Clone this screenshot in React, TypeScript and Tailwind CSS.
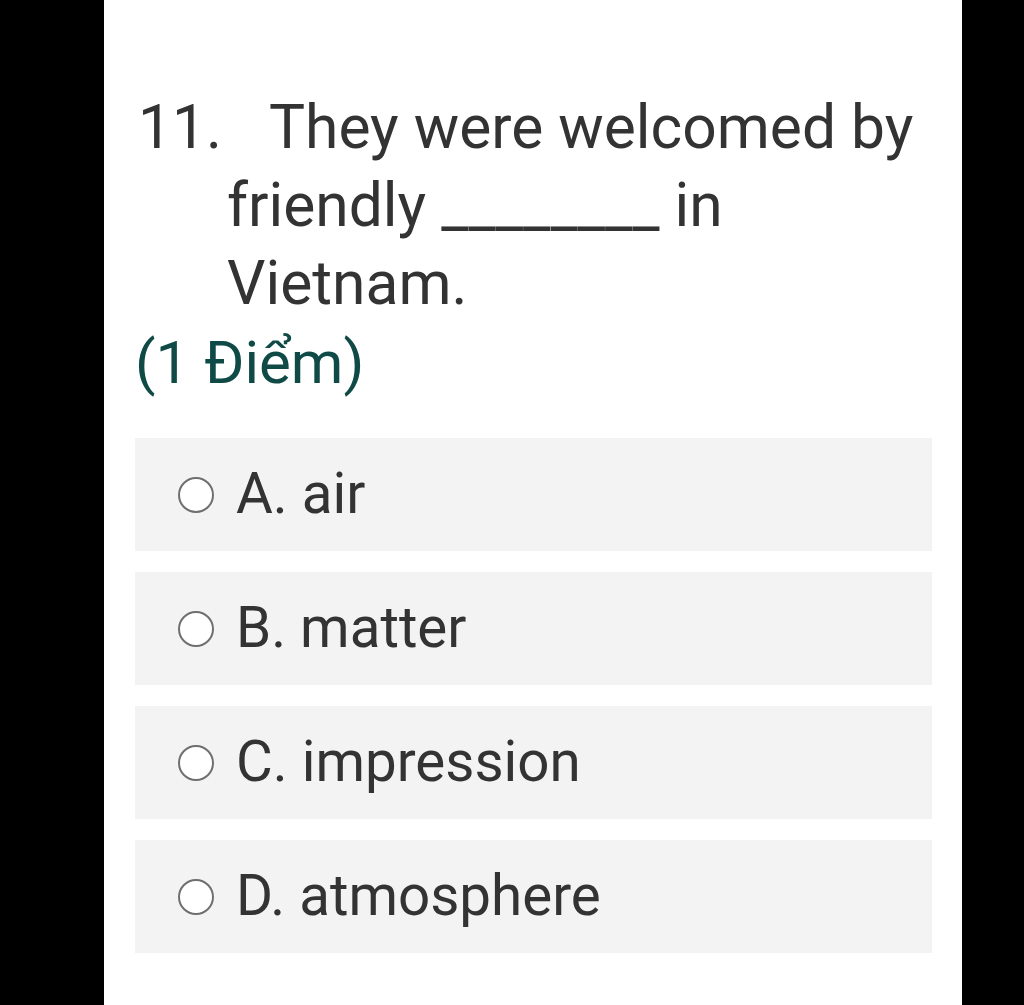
const options = ['A. air', 'B. matter', 'C. impression', 'D. atmosphere'];

function Radio() {
  return (
    <span className="inline-block w-[36px] h-[36px] shrink-0 rounded-full border-[2.5px] border-[#6f6f6f] bg-white" />
  );
}

export default function App() {
  return (
    <div className="min-h-[1005px] bg-black" style={{ fontFamily: 'Roboto, "Noto Sans", sans-serif' }}>
      <div className="ml-[104px] w-[858px] min-h-[1005px] bg-white pt-[89px] pl-[34px] pr-[30px]">
        {/* Question */}
        <p className="pl-[89px] -indent-[89px] text-[60.5px] leading-[78px] text-[#333333]">
          <span className="inline-block w-[131px] indent-0">11.</span>
          They were welcomed by friendly ________ in Vietnam.
        </p>
        <p className="-ml-[3px] text-[60px] leading-[80px] text-[#0f4a46]">(1 Điểm)</p>

        {/* Options */}
        <div className="mt-[35px] -ml-[3px] flex flex-col gap-[21px]">
          {options.map((opt) => (
            <div key={opt} className="h-[113px] bg-[#f3f3f3] flex items-center gap-[22px] pl-[43px]">
              <Radio />
              <span className="text-[56.5px] leading-none text-[#333333]">{opt}</span>
            </div>
          ))}
        </div>
      </div>
    </div>
  );
}
